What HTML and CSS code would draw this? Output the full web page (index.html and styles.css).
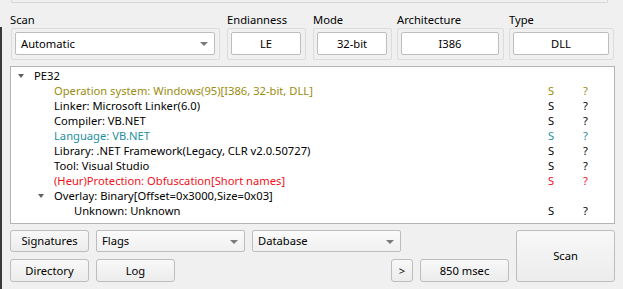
FILE: index.html
```html
<!DOCTYPE html>
<html>
<head>
    <title>Detect It Easy</title>
    <link rel="stylesheet" href="styles.css">
</head>
<body>
    <div class="app">
        <div class="topbox"></div>

        <div class="params">
            <div class="group g-scan">
                <div class="label">Scan</div>
                <div class="frame">
                    <div class="combo">Automatic <span class="arrow"></span></div>
                </div>
            </div>
            <div class="group g-endian">
                <div class="label">Endianness</div>
                <div class="frame"><div class="field">LE</div></div>
            </div>
            <div class="group g-mode">
                <div class="label">Mode</div>
                <div class="frame"><div class="field">32-bit</div></div>
            </div>
            <div class="group g-arch">
                <div class="label">Architecture</div>
                <div class="frame"><div class="field">I386</div></div>
            </div>
            <div class="group g-type">
                <div class="label">Type</div>
                <div class="frame"><div class="field">DLL</div></div>
            </div>
        </div>

        <div class="tree">
            <div class="row lvl0"><span class="name"><span class="branch"></span>PE32</span><span></span><span></span></div>
            <div class="row lvl1 olive"><span class="name">Operation system: Windows(95)[I386, 32-bit, DLL]</span><span>S</span><span>?</span></div>
            <div class="row lvl1"><span class="name">Linker: Microsoft Linker(6.0)</span><span>S</span><span>?</span></div>
            <div class="row lvl1"><span class="name">Compiler: VB.NET</span><span>S</span><span>?</span></div>
            <div class="row lvl1 teal"><span class="name">Language: VB.NET</span><span>S</span><span>?</span></div>
            <div class="row lvl1"><span class="name">Library: .NET Framework(Legacy, CLR v2.0.50727)</span><span>S</span><span>?</span></div>
            <div class="row lvl1"><span class="name">Tool: Visual Studio</span><span>S</span><span>?</span></div>
            <div class="row lvl1 red"><span class="name">(Heur)Protection: Obfuscation[Short names]</span><span>S</span><span>?</span></div>
            <div class="row lvl1"><span class="name"><span class="branch"></span>Overlay: Binary[Offset=0x3000,Size=0x03]</span><span></span><span></span></div>
            <div class="row lvl2"><span class="name">Unknown: Unknown</span><span>S</span><span>?</span></div>
        </div>

        <div class="bottom">
            <div class="controls">
                <div class="line">
                    <div class="btn w-small">Signatures</div>
                    <div class="combo w-combo">Flags <span class="arrow"></span></div>
                    <div class="combo w-combo">Database <span class="arrow"></span></div>
                </div>
                <div class="line">
                    <div class="btn w-small">Directory</div>
                    <div class="btn w-small">Log</div>
                    <div class="spacer"></div>
                    <div class="btn w-tiny">&gt;</div>
                    <div class="btn w-time">850 msec</div>
                </div>
            </div>
            <div class="btn big">Scan</div>
        </div>
    </div>
</body>
</html>
```

FILE: styles.css
```css
body {
    margin: 0;
    background-color: #f0f0f0;
    font-family: "Noto Sans", "Liberation Sans", sans-serif;
    font-size: 11.2px;
    color: #000;
    height: 289px;
    overflow: hidden;
}
/* dark edge of the window frame */
body::before {
    content: "";
    position: fixed;
    left: 0;
    top: 27px;
    bottom: 0;
    width: 2px;
    background-color: #3a3a3a;
}
.app {
    padding: 0 8px 0 10px;
}
.topbox {
    height: 2px;
    margin: 0 7px 0 1px;
    border: 1px solid #d6d6d6;
    border-top: none;
    border-radius: 0 0 2px 2px;
}

/* parameter groups */
.params {
    display: flex;
    margin-top: 8px;
}
.group .label {
    height: 17px;
    line-height: 17px;
}
.frame {
    border: 1px solid #dcdcdc;
    border-radius: 2px;
    padding: 3px 4px 4px 3px;
}
.g-scan { width: 209px; margin-left: 1px; }
.g-scan .label { margin-left: -1px; }
.g-endian { width: 79px; margin-left: 7px; }
.g-mode { width: 79px; margin-left: 7px; }
.g-arch { width: 107px; margin-left: 5px; }
.g-type { width: 105px; margin-left: 5px; }
.field {
    height: 21px;
    line-height: 21px;
    background-color: #fff;
    border: 1px solid #bdbdbd;
    border-radius: 2px;
    text-align: center;
}
.combo {
    position: relative;
    height: 21px;
    line-height: 21px;
    padding-left: 5px;
    background: linear-gradient(#fbfbfb, #f0f0f0);
    border: 1px solid #bdbdbd;
    border-radius: 2px;
}
.g-scan .combo {
    background: #fff;
}
.arrow {
    position: absolute;
    right: 6px;
    top: 9px;
    width: 0;
    height: 0;
    border-left: 4px solid transparent;
    border-right: 4px solid transparent;
    border-top: 4px solid #7a7a7a;
}

/* result tree */
.tree {
    margin: 6px 0 0 0;
    height: 155px;
    background-color: #fff;
    border: 1px solid #b4b4b4;
    padding-top: 1px;
}
.row {
    display: grid;
    grid-template-columns: 1fr 35px 26px;
    padding-right: 5px;
    height: 15px;
    line-height: 15px;
}
.row .name {
    position: relative;
    white-space: nowrap;
}
.lvl0 .name { padding-left: 23px; }
.lvl1 .name { padding-left: 43px; }
.lvl2 .name { padding-left: 63px; }
.branch {
    position: absolute;
    top: 6px;
    width: 0;
    height: 0;
    border-left: 3.5px solid transparent;
    border-right: 3.5px solid transparent;
    border-top: 4px solid #606060;
}
.lvl0 .branch { left: 7px; }
.lvl1 .branch { left: 27px; }
.olive { color: #9b8b10; }
.teal { color: #1e8fa0; }
.red { color: #f0101c; }

/* bottom buttons */
.bottom {
    display: flex;
    margin-top: 6px;
}
.controls {
    width: 499px;
}
.line {
    display: flex;
    gap: 7px;
    margin-bottom: 7px;
}
.line:last-child {
    margin-bottom: 0;
}
.spacer {
    flex: 1;
}
.btn {
    height: 21px;
    line-height: 21px;
    text-align: center;
    background: linear-gradient(#f8f8f8, #ececec);
    border: 1px solid #bdbdbd;
    border-radius: 3px;
}
.w-small { width: 77px; }
.w-combo { width: 142px; }
.w-tiny { width: 20px; }
.w-time { width: 87px; }
.line:first-child .btn { height: 20px; line-height: 20px; }
.line:first-child .combo { height: 20px; line-height: 20px; }
.big {
    width: 97px;
    height: 50px;
    line-height: 50px;
    margin-left: 7px;
}
```
